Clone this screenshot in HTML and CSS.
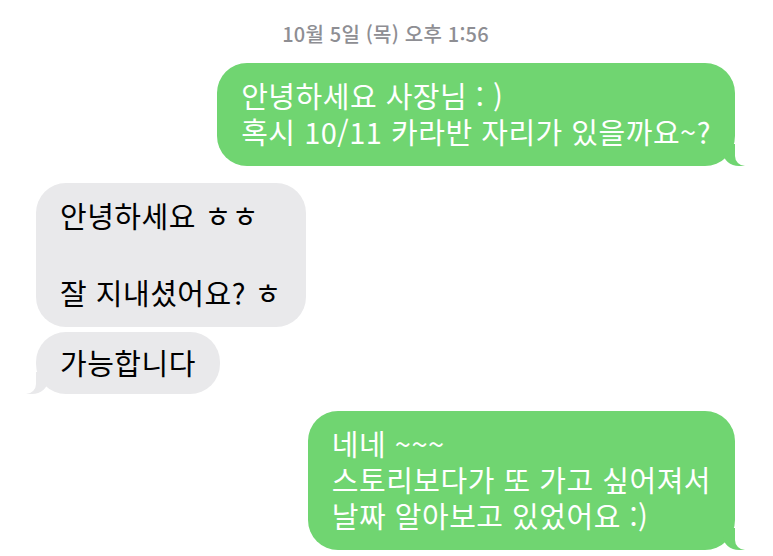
FILE: index.html
```html
<!DOCTYPE html>
<html lang="ko">
  <head>
    <meta charset="UTF-8" />
    <meta name="viewport" content="width=device-width, initial-scale=1.0" />
    <title>메시지</title>
    <link rel="stylesheet" href="styles.css">
  </head>
  <body>
    <div class="thread">
      <div class="stamp">10월 5일 (목) 오후 1:56</div>

      <div class="group sent">
        <div class="bubble tail">안녕하세요 사장님 : )<br>혹시 10/11 카라반 자리가 있을까요~?</div>
      </div>

      <div class="group received">
        <div class="bubble">안녕하세요 ㅎㅎ<br><span class="blank"></span><br>잘 지내셨어요? ㅎ</div>
        <div class="bubble tail short">가능합니다</div>
      </div>

      <div class="group sent">
        <div class="bubble tail">네네 ~~~<br>스토리보다가 또 가고 싶어져서<br>날짜 알아보고 있었어요 :)</div>
      </div>
    </div>
  </body>
</html>
```

FILE: styles.css
```css
body,
html {
  margin: 0;
  padding: 0;
  background-color: #ffffff;
  font-family: "Noto Sans CJK KR", "Noto Sans", sans-serif;
}
.thread {
  display: flex;
  flex-direction: column;
  gap: 17px;
  padding: 21px 38px 0 36px;
}
.stamp {
  text-align: center;
  font-size: 20px;
  line-height: 25px;
  font-weight: 500;
  letter-spacing: 0.2px;
  color: #8e8e93;
}
.group {
  display: flex;
  flex-direction: column;
  gap: 5px;
}
.sent {
  align-items: flex-end;
}
.received {
  align-items: flex-start;
}
.bubble {
  position: relative;
  padding: 14px 24px 17px;
  border-radius: 30px;
  font-size: 29px;
  line-height: 36px;
  letter-spacing: 0.5px;
  white-space: nowrap;
}
.bubble.short {
  padding: 12px 24px 14px;
}
.sent .bubble {
  background-color: #70d571;
  color: #ffffff;
}
.received .bubble {
  background-color: #e9e9eb;
  color: #000000;
}
.blank {
  display: inline-block;
  height: 36px;
}

/* bubble tails */
.tail::before,
.tail::after {
  content: "";
  position: absolute;
  bottom: 0;
  height: 22px;
}
.sent .tail::before {
  right: -10px;
  width: 22px;
  background-color: #70d571;
  border-bottom-left-radius: 16px 14px;
}
.sent .tail::after {
  right: -30px;
  width: 30px;
  background-color: #ffffff;
  border-bottom-left-radius: 10px;
}
.received .tail::before {
  left: -10px;
  width: 22px;
  background-color: #e9e9eb;
  border-bottom-right-radius: 16px 14px;
}
.received .tail::after {
  left: -30px;
  width: 30px;
  background-color: #ffffff;
  border-bottom-right-radius: 10px;
}
```
